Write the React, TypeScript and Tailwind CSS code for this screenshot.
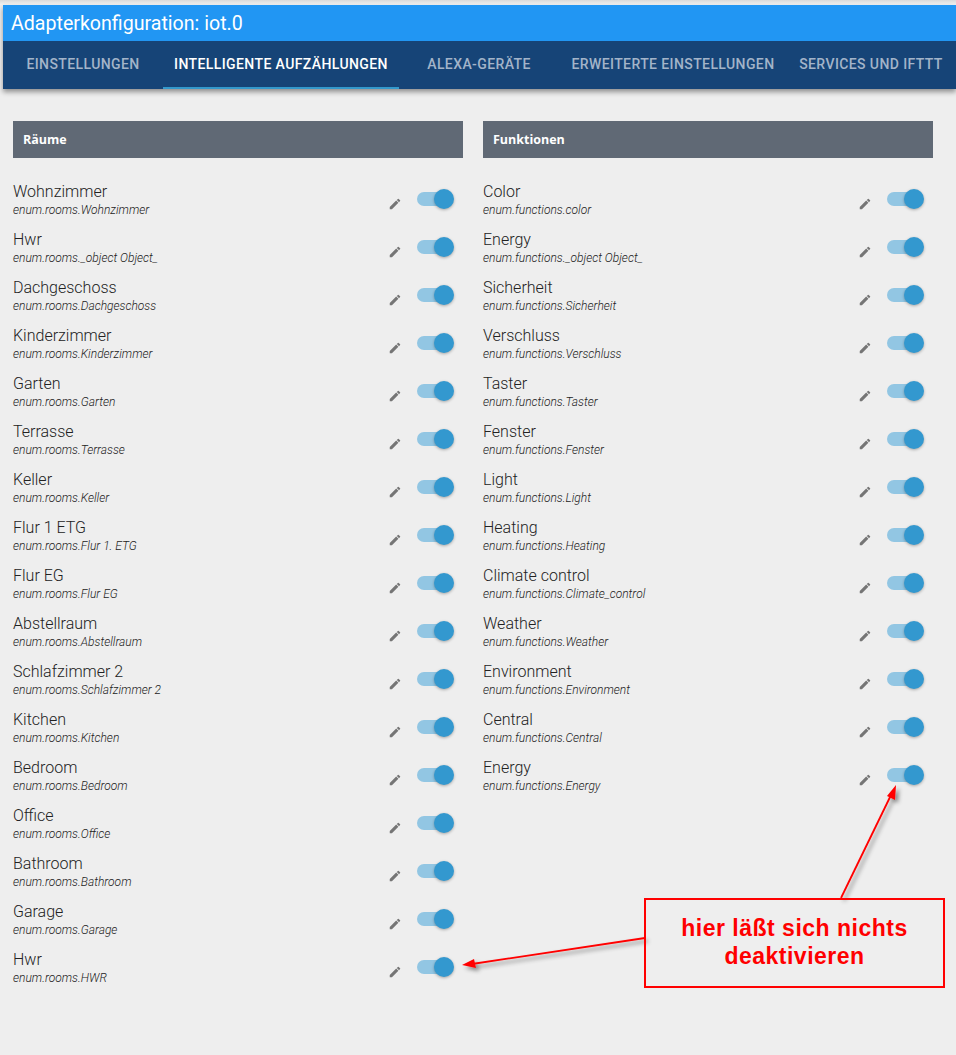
import React from "react";

const rooms: [string, string][] = [
  ["Wohnzimmer", "enum.rooms.Wohnzimmer"],
  ["Hwr", "enum.rooms._object Object_"],
  ["Dachgeschoss", "enum.rooms.Dachgeschoss"],
  ["Kinderzimmer", "enum.rooms.Kinderzimmer"],
  ["Garten", "enum.rooms.Garten"],
  ["Terrasse", "enum.rooms.Terrasse"],
  ["Keller", "enum.rooms.Keller"],
  ["Flur 1 ETG", "enum.rooms.Flur 1. ETG"],
  ["Flur EG", "enum.rooms.Flur EG"],
  ["Abstellraum", "enum.rooms.Abstellraum"],
  ["Schlafzimmer 2", "enum.rooms.Schlafzimmer 2"],
  ["Kitchen", "enum.rooms.Kitchen"],
  ["Bedroom", "enum.rooms.Bedroom"],
  ["Office", "enum.rooms.Office"],
  ["Bathroom", "enum.rooms.Bathroom"],
  ["Garage", "enum.rooms.Garage"],
  ["Hwr", "enum.rooms.HWR"],
];

const funcs: [string, string][] = [
  ["Color", "enum.functions.color"],
  ["Energy", "enum.functions._object Object_"],
  ["Sicherheit", "enum.functions.Sicherheit"],
  ["Verschluss", "enum.functions.Verschluss"],
  ["Taster", "enum.functions.Taster"],
  ["Fenster", "enum.functions.Fenster"],
  ["Light", "enum.functions.Light"],
  ["Heating", "enum.functions.Heating"],
  ["Climate control", "enum.functions.Climate_control"],
  ["Weather", "enum.functions.Weather"],
  ["Environment", "enum.functions.Environment"],
  ["Central", "enum.functions.Central"],
  ["Energy", "enum.functions.Energy"],
];

function Pencil() {
  return (
    <svg width="14" height="14" viewBox="0 0 24 24" className="mt-[8px] ml-[1px] text-[#757575]" fill="currentColor">
      <path d="M3 17.25V21h3.75L17.81 9.94l-3.75-3.75L3 17.25zM20.71 7.04a1 1 0 0 0 0-1.41l-2.34-2.34a1 1 0 0 0-1.41 0l-1.83 1.83 3.75 3.75 1.83-1.83z" />
    </svg>
  );
}

function Toggle() {
  return (
    <div className="relative w-[37px] h-[20px] ml-[15px]">
      <div className="absolute left-0 top-[3px] w-[34px] h-[14px] rounded-full bg-[#92c6e3]" />
      <div className="absolute right-0 top-0 w-[20px] h-[20px] rounded-full bg-[#3398cf] shadow-[0_1px_3px_rgba(0,0,0,0.3)]" />
    </div>
  );
}

function Row({ name, id }: { name: string; id: string }) {
  return (
    <div className="h-[48px] flex items-start">
      <div className="flex-1 min-w-0">
        <div className="text-[16px] leading-[20px] text-[#222222] font-['Roboto',sans-serif] font-light">{name}</div>
        <div className="text-[12px] leading-[16px] italic text-[#222222] font-['Roboto',sans-serif] font-light">{id}</div>
      </div>
      <div className="flex items-start pr-[9px] pt-[7px]">
        <Pencil />
        <Toggle />
      </div>
    </div>
  );
}

function Panel({ title, items }: { title: string; items: [string, string][] }) {
  return (
    <div className="w-[450px]">
      <div className="h-[37px] bg-[#606975] flex items-center pl-[10px] pt-[2px] text-[12.5px] font-bold text-white font-['Open_Sans',sans-serif]">
        {title}
      </div>
      <div className="pt-[24px]">
        {items.map(([n, i], k) => (
          <Row key={k} name={n} id={i} />
        ))}
      </div>
    </div>
  );
}

const tabs = [
  { label: "EINSTELLUNGEN", cls: "w-[160px]" },
  { label: "INTELLIGENTE AUFZÄHLUNGEN", cls: "w-[236px]", active: true },
  { label: "ALEXA-GERÄTE", cls: "w-[160px]" },
  { label: "ERWEITERTE EINSTELLUNGEN", cls: "w-[228px]" },
  { label: "SERVICES UND IFTTT", cls: "w-[168px]" },
];

export default function App() {
  return (
    <div className="relative w-[956px] h-[1055px] bg-[#eeeeee] overflow-hidden font-['Roboto',sans-serif]">
      <div className="h-[5px] bg-[linear-gradient(#d9d9d9,#f4f4f4)]" />
      <div className="ml-[3px] shadow-[0_3px_5px_rgba(0,0,0,0.4)]">
        <div className="h-[36px] bg-[#2196f3] text-white text-[19.6px] leading-[36px] pl-[8px] pt-[1px]">
          Adapterkonfiguration: iot.0
        </div>
        <div className="h-[48px] bg-[#164477] flex">
          {tabs.map((t) => (
            <div
              key={t.label}
              className={
                t.active
                  ? "h-[48px] flex items-center justify-center whitespace-nowrap text-[14px] font-medium tracking-[0.4px] text-white border-b-[2px] border-[#3399cc] w-[236px]"
                  : "h-[48px] flex items-center justify-center whitespace-nowrap text-[14px] font-medium tracking-[0.4px] text-[#a3b4c9] border-b-[2px] border-transparent " + t.cls
              }
            >
              {t.label}
            </div>
          ))}
        </div>
      </div>
      <div className="flex gap-[20px] pl-[13px] pt-[32px]">
        <Panel title="Räume" items={rooms} />
        <Panel title="Funktionen" items={funcs} />
      </div>

      <svg className="absolute left-0 top-0 pointer-events-none" width="956" height="1055" viewBox="0 0 956 1055">
        <defs>
          <filter id="sh" x="-30%" y="-30%" width="160%" height="160%">
            <feDropShadow dx="3" dy="3" stdDeviation="2" floodColor="#000" floodOpacity="0.45" />
          </filter>
        </defs>
        <g filter="url(#sh)">
          <line x1="841" y1="898" x2="892" y2="793" stroke="#ff0000" strokeWidth="1.8" />
          <polygon points="896,785 895,800 887,796" fill="#ff0000" />
          <line x1="645" y1="938" x2="472" y2="964" stroke="#ff0000" strokeWidth="1.8" />
          <polygon points="462,965 474,959 476,968" fill="#ff0000" />
        </g>
      </svg>

      <div className="absolute left-[644px] top-[898px] w-[301px] h-[90px] border-[2px] border-[#ff0000] flex flex-col items-center justify-center text-[#ff0000] text-[23px] leading-[28px] font-bold tracking-[0.5px] font-['Liberation_Sans',sans-serif] pb-[2px]">
        <div>hier läßt sich nichts</div>
        <div>deaktivieren</div>
      </div>
    </div>
  );
}
